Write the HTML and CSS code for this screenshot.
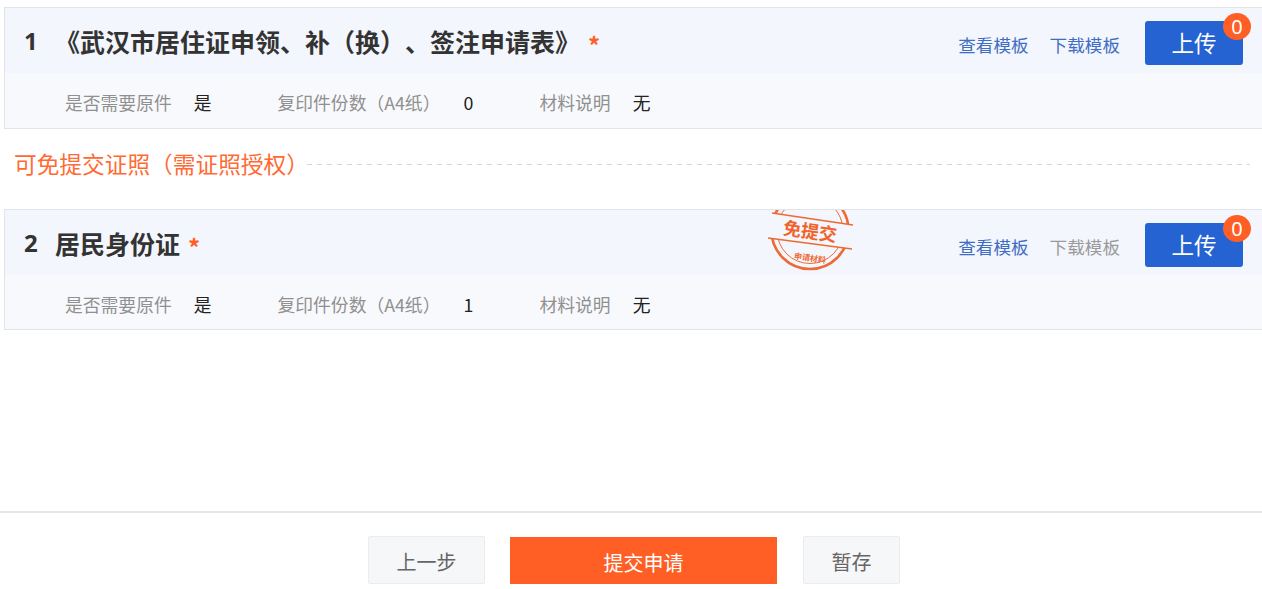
FILE: index.html
```html
<!DOCTYPE html>
<html lang="zh-CN">
<head>
    <meta charset="UTF-8">
    <meta name="viewport" content="width=device-width, initial-scale=1.0">
    <title>提交申请</title>
    <link rel="stylesheet" href="styles.css">
</head>
<body>
    <div class="list">
        <div class="card">
            <div class="card-head">
                <span class="num">1</span>
                <span class="title">《武汉市居住证申领、补（换）、签注申请表》</span>
                <span class="star">*</span>
                <div class="actions">
                    <a class="link">查看模板</a>
                    <a class="link">下载模板</a>
                    <button class="upload">上传<span class="badge">0</span></button>
                </div>
            </div>
            <div class="card-body">
                <span class="label label-a">是否需要原件</span><span class="value value-a">是</span>
                <span class="label label-b">复印件份数（A4纸）</span><span class="value value-b">0</span>
                <span class="label label-c">材料说明</span><span class="value">无</span>
            </div>
        </div>

        <div class="divider">
            <span class="divider-text">可免提交证照（需证照授权）</span>
            <span class="divider-line"></span>
        </div>

        <div class="card card-short">
            <div class="card-head">
                <span class="num">2</span>
                <span class="title">居民身份证</span>
                <span class="star">*</span>
                <svg class="stamp" width="90" height="62" viewBox="0 0 90 62">
                    <g fill="none" stroke="#ee6a34">
                        <circle cx="44" cy="20.5" r="38.5" stroke-width="2.6"/>
                        <circle cx="44" cy="20.5" r="33" stroke-width="1"/>
                    </g>
                    <polygon points="6,3 87,15 86,39 2,28" fill="#f3f6fc"/>
                    <path d="M6 3 L87 15 M2 28 L86 39" stroke="#ee6a34" stroke-width="1.4"/>
                    <text class="stamp-big" x="44" y="28" text-anchor="middle" transform="rotate(8 44 22)">免提交</text>
                    <text class="stamp-small" x="44" y="51" text-anchor="middle" transform="rotate(8 44 48)">申请材料</text>
                </svg>
                <div class="actions">
                    <a class="link">查看模板</a>
                    <a class="link link-off">下载模板</a>
                    <button class="upload">上传<span class="badge">0</span></button>
                </div>
            </div>
            <div class="card-body">
                <span class="label label-a">是否需要原件</span><span class="value value-a">是</span>
                <span class="label label-b">复印件份数（A4纸）</span><span class="value value-b">1</span>
                <span class="label label-c">材料说明</span><span class="value">无</span>
            </div>
        </div>
    </div>

    <div class="footer">
        <button class="btn btn-prev">上一步</button>
        <button class="btn btn-submit">提交申请</button>
        <button class="btn btn-save">暂存</button>
    </div>
</body>
</html>
```

FILE: styles.css
```css
* {
    box-sizing: border-box;
}

html, body {
    overflow: hidden;
}

body {
    margin: 0;
    height: 589px;
    background-color: #fff;
    font-family: "Noto Sans CJK SC", "Noto Sans", sans-serif;
    text-spacing-trim: space-all;
    display: flex;
    flex-direction: column;
}

.list {
    padding: 7px 0 0 4px;
    height: 511px;
}

.card {
    height: 122px;
    border: 1px solid #e2e4e9;
    border-right: none;
    background-color: #f8f9fc;
    overflow: hidden;
}

.card-short {
    height: 121px;
}

.card-head {
    position: relative;
    height: 65px;
    padding-left: 19px;
    display: flex;
    align-items: center;
    background-color: #f3f6fc;
}

.num {
    width: 31px;
    font-family: "Noto Sans", sans-serif;
    font-size: 24px;
    font-weight: 700;
    color: #333;
}

.title {
    font-size: 25px;
    font-weight: 700;
    color: #333;
    white-space: nowrap;
}

.star {
    margin-left: 8px;
    padding-top: 8px;
    font-size: 24px;
    font-weight: 700;
    color: #ff5f24;
}

.stamp {
    position: absolute;
    left: 761px;
    top: 0;
}

.stamp-big {
    font-size: 18px;
    font-weight: 700;
    fill: #f0642c;
}

.stamp-small {
    font-size: 8px;
    font-weight: 700;
    fill: #ee6a34;
}

.actions {
    margin-left: auto;
    padding-right: 19px;
    display: flex;
    align-items: center;
}

.link {
    margin-right: 21px;
    padding-top: 7px;
    font-size: 17.6px;
    color: #3f6cc4;
}

.link-off {
    color: #9a9a9a;
}

.link:nth-child(2) {
    margin-right: 25px;
}

.upload {
    position: relative;
    width: 98px;
    height: 44px;
    margin-top: 5px;
    padding: 0 0 2px;
    border: none;
    border-radius: 3px;
    background-color: #2463d1;
    font-family: inherit;
    font-size: 22.5px;
    color: #fff;
}

.badge {
    position: absolute;
    top: -8px;
    right: -8px;
    width: 28px;
    height: 27px;
    border-radius: 50%;
    background-color: #ff5f24;
    font-family: "Noto Sans", sans-serif;
    font-size: 20px;
    line-height: 27px;
    text-align: center;
}

.card-body {
    height: 55px;
    padding: 3px 0 0 60px;
    display: flex;
    align-items: center;
    font-size: 17.8px;
}

.label {
    color: #909090;
}

.value {
    color: #222;
}

.label-a {
    margin-right: 22px;
}

.value-a {
    margin-right: 66px;
}

.label-b {
    margin-right: 31px;
    width: 155px;
    white-space: nowrap;
}

.value-b {
    width: 76px;
}

.label-c {
    margin-right: 22px;
}

.divider {
    height: 80px;
    padding: 0 12px 12px 10px;
    display: flex;
    align-items: center;
}

.divider-text {
    font-size: 22.7px;
    color: #ff6a33;
    white-space: nowrap;
}

.divider-line {
    flex: 1;
    height: 1px;
    margin-left: -2px;
    margin-top: 3px;
    background-image: repeating-linear-gradient(to right, #d6d6d6 0, #d6d6d6 5px, transparent 5px, transparent 10px);
}

.footer {
    height: 78px;
    border-top: 2px solid #e4e6ec;
    padding: 23px 0 0 368px;
    display: flex;
    align-items: flex-start;
}

.btn {
    height: 48px;
    padding-top: 4px;
    border: 1px solid #eaecef;
    border-radius: 2px;
    background-color: #f6f7f9;
    font-family: inherit;
    font-size: 20px;
    color: #666;
}

.btn-prev {
    width: 117px;
    margin-right: 25px;
}

.btn-submit {
    width: 267px;
    height: 47px;
    margin-top: 1px;
    margin-right: 26px;
    border: none;
    border-radius: 0;
    background-color: #ff5f24;
    color: #fff;
}

.btn-save {
    width: 97px;
}
```
